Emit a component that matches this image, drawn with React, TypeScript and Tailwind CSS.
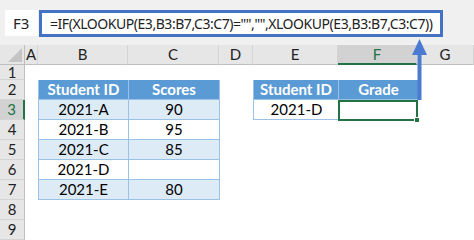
const cols = ['A', 'B', 'C', 'D', 'E', 'F', 'G'];
const rows = [1, 2, 3, 4, 5, 6, 7, 8, 9];

const scores = [
  { id: '2021-A', score: '90' },
  { id: '2021-B', score: '95' },
  { id: '2021-C', score: '85' },
  { id: '2021-D', score: '' },
  { id: '2021-E', score: '80' },
];

const cellFont = { fontFamily: 'Lato, "Noto Sans", sans-serif' };

function ColumnHeader({ label }: { label: string }) {
  const active = label === 'F';
  return (
    <div
      className={
        'flex items-center justify-center border-r border-[#d4d4d4] text-[15px] ' +
        (active
          ? 'bg-[#d2d2d2] text-[#217346] border-b-2 border-b-[#217346]'
          : 'bg-[#e6e6e6] text-[#222] border-b border-b-[#bfbfbf]')
      }
    >
      {label}
    </div>
  );
}

function RowHeader({ n }: { n: number }) {
  const active = n === 3;
  return (
    <div
      className={
        'col-start-1 flex items-center justify-center border-b border-[#d4d4d4] text-[15px] ' +
        (active
          ? 'bg-[#d2d2d2] text-[#217346] border-r-2 border-r-[#217346]'
          : 'bg-[#e6e6e6] text-[#222] border-r border-r-[#bfbfbf]')
      }
    >
      {n}
    </div>
  );
}

export default function App() {
  return (
    <div className="relative h-[240px] w-[474px] overflow-hidden bg-[#f0f0f0]" style={cellFont}>
      {/* name box + formula bar */}
      <div className="flex h-[45px] items-start gap-[1px] pl-[5px] pt-[10px]">
        <div className="flex h-[26px] w-[33px] items-center bg-white pl-[8px] text-[15px] text-[#222]" style={{ fontFamily: '"Noto Sans", sans-serif' }}>
          F3
        </div>
        <div className="flex h-[27px] w-[404px] items-center overflow-hidden whitespace-nowrap border-[3px] border-[#4472c4] bg-white pl-[8px] text-[14px] tracking-[-0.45px] text-[#222]" style={{ fontFamily: '"Noto Sans", sans-serif' }}>
          =IF(XLOOKUP(E3,B3:B7,C3:C7)="","",XLOOKUP(E3,B3:B7,C3:C7))
        </div>
      </div>

      {/* sheet */}
      <div className="grid grid-cols-[25px_13px_90px_91px_34px_85px_79px_57px] grid-rows-[20px_15px_repeat(8,20px)] bg-white">
        {/* select-all corner */}
        <div className="relative border-b border-r border-[#bfbfbf] bg-[#e6e6e6]">
          <svg className="absolute bottom-[2px] right-[2px]" width="14" height="14" viewBox="0 0 14 14">
            <polygon points="14,0 14,14 0,14" fill="#c4c4c4" />
          </svg>
        </div>
        {cols.map((c) => (
          <ColumnHeader key={c} label={c} />
        ))}

        {rows.map((n) => (
          <RowHeader key={n} n={n} />
        ))}

        {/* B2:C7 scores table */}
        <div className="col-start-3 col-end-5 row-start-3 row-end-9 grid grid-cols-[90px_91px] grid-rows-[repeat(6,20px)] border-l border-[#9bc2e6] text-[15px] text-black">
          <div className="flex items-center justify-center border-r border-b border-[#9bc2e6] bg-[#5b9bd5] font-bold text-white">
            Student ID
          </div>
          <div className="flex items-center justify-center border-r border-b border-[#9bc2e6] bg-[#5b9bd5] font-bold text-white">
            Scores
          </div>
          {scores.map((r, i) => (
            <div key={r.id} className="contents">
              <div className={'flex items-center justify-center border-r border-b border-[#9bc2e6] ' + (i % 2 === 0 ? 'bg-[#ddebf7]' : 'bg-white')}>
                {r.id}
              </div>
              <div className={'flex items-center justify-center border-r border-b border-[#9bc2e6] ' + (i % 2 === 0 ? 'bg-[#ddebf7]' : 'bg-white')}>
                {r.score}
              </div>
            </div>
          ))}
        </div>

        {/* E2:F3 lookup table */}
        <div className="col-start-6 col-end-8 row-start-3 row-end-5 grid grid-cols-[85px_79px] grid-rows-[20px_20px] border-l border-[#9bc2e6] text-[15px] text-black">
          <div className="flex items-center justify-center border-r border-b border-[#9bc2e6] bg-[#5b9bd5] font-bold text-white">
            Student ID
          </div>
          <div className="flex items-center justify-center border-b border-[#9bc2e6] bg-[#5b9bd5] font-bold text-white">
            Grade
          </div>
          <div className="flex items-center justify-center border-b border-[#9bc2e6] bg-white">
            2021-D
          </div>
          {/* active cell F3 */}
          <div className="relative -mb-[1px] -ml-[1px] border-2 border-[#217346] bg-white">
            <div className="absolute -bottom-[4px] -right-[4px] h-[6px] w-[6px] border border-white bg-[#217346]" />
          </div>
        </div>
      </div>

      {/* arrow from F3 up to the formula bar */}
      <svg className="absolute left-[410px] top-[38px]" width="20" height="64" viewBox="0 0 20 64">
        <polygon points="9.5,1 17,17 2,17" fill="#4a7bd0" />
        <rect x="7.5" y="16" width="4" height="46" fill="#4a7bd0" />
      </svg>
    </div>
  );
}
